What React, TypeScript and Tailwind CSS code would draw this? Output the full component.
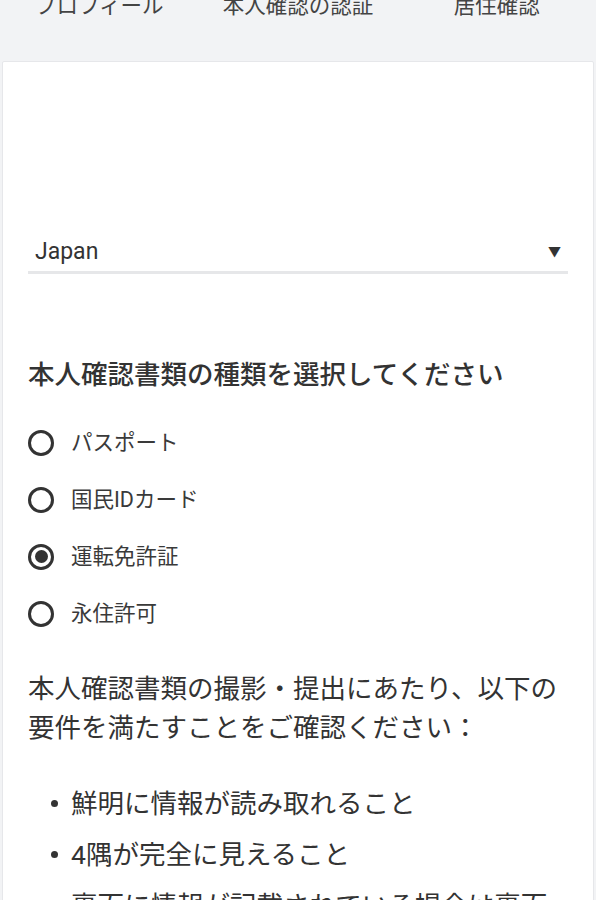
import React from "react";

const font = { fontFamily: 'Roboto, "Noto Sans CJK JP", "Noto Sans", sans-serif' };

function Radio({ label, checked }: { label: string; checked?: boolean }) {
  return (
    <div className="flex h-[57px] items-center">
      <span className="flex h-[26px] w-[26px] items-center justify-center rounded-full border-[3px] border-[#333]">
        {checked && <span className="h-[13px] w-[13px] rounded-full bg-[#333]" />}
      </span>
      <span className="ml-[17px] text-[21.5px] leading-[30px] text-[#3a3a3a]">{label}</span>
    </div>
  );
}

function Bullet({ text }: { text: string }) {
  return (
    <li className="flex items-start">
      <span className="ml-[23px] mt-[22px] h-[7px] w-[7px] shrink-0 rounded-full bg-[#333]" />
      <span className="ml-[13px] text-[26.5px] leading-[51px] text-[#333]">{text}</span>
    </li>
  );
}

export default function App() {
  return (
    <div className="h-[900px] overflow-hidden bg-[#f2f3f5]" style={font}>
      <div className="-mt-[9px] grid grid-cols-3 text-center text-[21.5px] leading-[30px] text-[#444]">
        <div>プロフィール</div>
        <div>本人確認の認証</div>
        <div>居住確認</div>
      </div>
      <div className="mx-[2px] mt-[40px] rounded-[2px] border border-[#e6e7ea] bg-white px-[25px] pt-[171px] pb-[40px]">
        <div className="flex h-[41px] items-center justify-between border-b-[3px] border-[#e6e7e9] pl-[7px] pr-[7px]">
          <span className="text-[23px] text-[#333]">Japan</span>
          <span className="text-[13px] text-[#333]">▼</span>
        </div>
        <h2 className="mt-[83px] text-[26.5px] font-medium leading-[36px] text-[#333]">
          本人確認書類の種類を選択してください
        </h2>
        <div className="mt-[21px] flex flex-col">
          <Radio label="パスポート" />
          <Radio label="国民IDカード" />
          <Radio label="運転免許証" checked />
          <Radio label="永住許可" />
        </div>
        <p className="mt-[27px] text-[26.5px] leading-[39px] text-[#333]">
          本人確認書類の撮影・提出にあたり、以下の
          <br />
          要件を満たすことをご確認ください：
        </p>
        <ul className="mt-[31px]">
          <Bullet text="鮮明に情報が読み取れること" />
          <Bullet text="4隅が完全に見えること" />
          <Bullet text="裏面に情報が記載されている場合は裏面も撮影すること" />
        </ul>
      </div>
    </div>
  );
}
